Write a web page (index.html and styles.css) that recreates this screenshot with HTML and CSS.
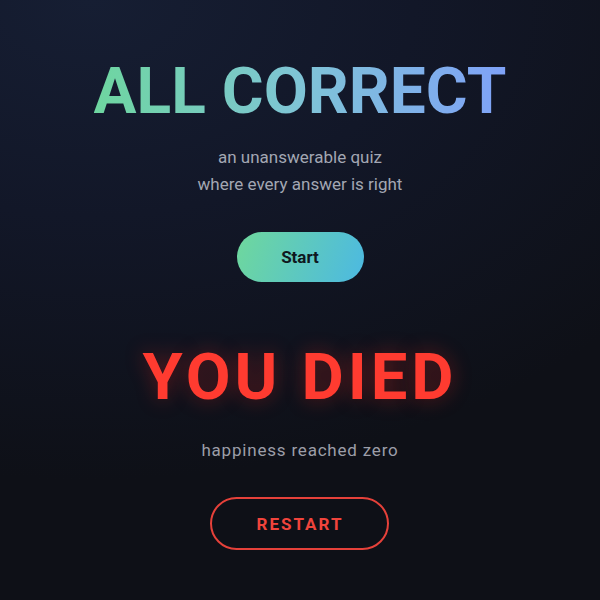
FILE: index.html
```html
<!DOCTYPE html>
<html>
<head>
<meta charset="utf-8">
<link rel="stylesheet" href="styles.css">
</head>
<body>
<main class="page">
  <section class="intro">
    <h1 class="title">ALL CORRECT</h1>
    <p class="tagline">an unanswerable quiz<br>where every answer is right</p>
    <button class="start">Start</button>
  </section>
  <section class="death">
    <h2 class="died">YOU DIED</h2>
    <p class="reason">happiness reached zero</p>
    <button class="restart">RESTART</button>
  </section>
</main>
</body>
</html>
```
FILE: styles.css
```css
* { box-sizing: border-box; }
html, body { margin: 0; padding: 0; }
body {
  width: 600px;
  height: 600px;
  overflow: hidden;
  font-family: Roboto, "Liberation Sans", sans-serif;
  background: radial-gradient(ellipse 120% 80% at 15% 0%, #161e33 0%, #121728 45%, #0e1017 100%);
}
.page {
  display: flex;
  flex-direction: column;
  align-items: center;
  padding-top: 60px;
}
.intro, .death {
  display: flex;
  flex-direction: column;
  align-items: center;
}
.title {
  margin: 0;
  font-size: 64px;
  font-weight: 700;
  letter-spacing: 0;
  line-height: 64px;
  background: linear-gradient(90deg, #6ed6a0 0%, #7fc4d6 50%, #7fa2f8 100%);
  -webkit-background-clip: text;
  background-clip: text;
  color: transparent;
}
.tagline {
  margin: 20px 0 0;
  font-size: 17px;
  line-height: 27px;
  color: #a3a7b3;
  text-align: center;
}
.start {
  margin-top: 34px;
  width: 127px;
  height: 50px;
  border: none;
  border-radius: 25px;
  background: linear-gradient(110deg, #6fd89c 0%, #4cb9e2 100%);
  color: #0f1820;
  font-family: inherit;
  font-size: 17px;
  font-weight: 700;
}
.death { margin-top: 63px; }
.died {
  margin: 0;
  font-size: 65px;
  font-weight: 700;
  letter-spacing: 4px;
  line-height: 64px;
  color: #ff3b30;
  text-shadow: 0 0 20px rgba(255, 40, 30, 0.35);
}
.reason {
  margin: 29px 0 0;
  font-size: 17px;
  letter-spacing: 0.8px;
  line-height: 24px;
  color: #9c9ea8;
}
.restart {
  margin-top: 35px;
  width: 179px;
  height: 53px;
  border: 2px solid #e5413a;
  border-radius: 27px;
  background: transparent;
  color: #f0443c;
  font-family: inherit;
  font-size: 17px;
  font-weight: 700;
  letter-spacing: 2px;
}
```
